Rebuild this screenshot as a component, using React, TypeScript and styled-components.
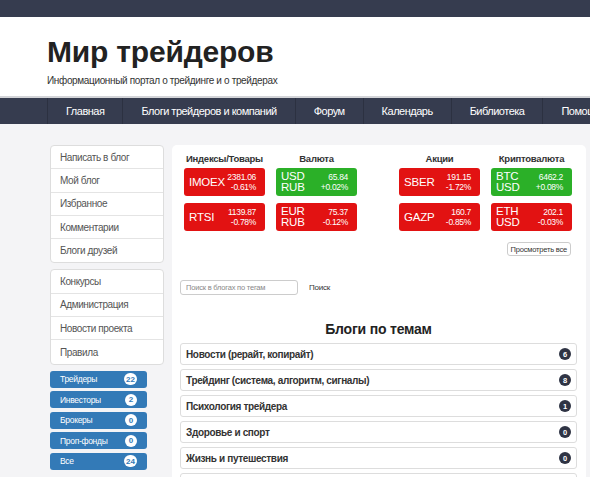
import React from 'react';
import styled, { createGlobalStyle } from 'styled-components';

const GlobalStyle = createGlobalStyle`
body {
  margin: 0;
  overflow: hidden;
  font-family: "Liberation Sans", Arial, sans-serif;
  background: #f4f4f6;
}
`;

type Quote = { name: string[]; price: string; change: string; up?: boolean };

const columns: { title: string; shift: number; quotes: Quote[] }[] = [
  {
    title: 'Индексы/Товары',
    shift: 0,
    quotes: [
      { name: ['IMOEX'], price: '2381.06', change: '-0.61%' },
      { name: ['RTSI'], price: '1139.87', change: '-0.78%' },
    ],
  },
  {
    title: 'Валюта',
    shift: 11,
    quotes: [
      { name: ['USD', 'RUB'], price: '65.84', change: '+0.02%', up: true },
      { name: ['EUR', 'RUB'], price: '75.37', change: '-0.12%' },
    ],
  },
  {
    title: 'Акции',
    shift: 42,
    quotes: [
      { name: ['SBER'], price: '191.15', change: '-1.72%' },
      { name: ['GAZP'], price: '160.7', change: '-0.85%' },
    ],
  },
  {
    title: 'Криптовалюта',
    shift: 11,
    quotes: [
      { name: ['BTC', 'USD'], price: '6462.2', change: '+0.08%', up: true },
      { name: ['ETH', 'USD'], price: '202.1', change: '-0.03%' },
    ],
  },
];

const topics = [
  { title: 'Новости (рерайт, копирайт)', count: 6 },
  { title: 'Трейдинг (система, алгоритм, сигналы)', count: 8 },
  { title: 'Психология трейдера', count: 1 },
  { title: 'Здоровье и спорт', count: 0 },
  { title: 'Жизнь и путешествия', count: 0 },
  { title: 'Разное', count: 0 },
];

const groups = [
  { title: 'Трейдеры', count: 22 },
  { title: 'Инвесторы', count: 2 },
  { title: 'Брокеры', count: 0 },
  { title: 'Проп-фонды', count: 0 },
  { title: 'Все', count: 24 },
];

const App = () => {
  return (
    <Page>
      <GlobalStyle />
      <TopStrip />
      <Header>
        <Title>Мир трейдеров</Title>
        <Subtitle>Информационный портал о трейдинге и о трейдерах</Subtitle>
      </Header>
      <Nav>
        <NavList>
          <NavItem>Главная</NavItem>
          <NavItem>Блоги трейдеров и компаний</NavItem>
          <NavItem>Форум</NavItem>
          <NavItem>Календарь</NavItem>
          <NavItem>Библиотека</NavItem>
          <NavItem>Помощь</NavItem>
        </NavList>
      </Nav>

      <Content>
        <Sidebar>
          <ListGroup>
            <ListItem>Написать в блог</ListItem>
            <ListItem>Мой блог</ListItem>
            <ListItem>Избранное</ListItem>
            <ListItem>Комментарии</ListItem>
            <ListItem>Блоги друзей</ListItem>
          </ListGroup>
          <ListGroup>
            <ListItem>Конкурсы</ListItem>
            <ListItem>Администрация</ListItem>
            <ListItem>Новости проекта</ListItem>
            <ListItem>Правила</ListItem>
          </ListGroup>
          <Buttons>
            {groups.map((g) => (
              <BlueButton key={g.title}>
                {g.title}
                <WhiteBadge>{g.count}</WhiteBadge>
              </BlueButton>
            ))}
          </Buttons>
        </Sidebar>

        <Panel>
          <Quotes>
            {columns.map((c) => (
              <QuoteColumn key={c.title} $shift={c.shift}>
                <ColumnTitle>{c.title}</ColumnTitle>
                {c.quotes.map((q) => (
                  <QuoteCard key={q.price} $up={q.up}>
                    <Ticker $small={q.name.length > 1}>
                      {q.name.map((n) => (
                        <span key={n}>{n}</span>
                      ))}
                    </Ticker>
                    <Numbers>
                      <span>{q.price}</span>
                      <span>{q.change}</span>
                    </Numbers>
                  </QuoteCard>
                ))}
              </QuoteColumn>
            ))}
          </Quotes>
          <MoreRow>
            <SmallButton>Просмотреть все</SmallButton>
          </MoreRow>

          <SearchRow>
            <SearchInput placeholder="Поиск в блогах по тегам" />
            <SearchLink>Поиск</SearchLink>
          </SearchRow>

          <SectionTitle>Блоги по темам</SectionTitle>
          <TopicList>
            {topics.map((t) => (
              <TopicItem key={t.title}>
                {t.title}
                <DarkBadge>{t.count}</DarkBadge>
              </TopicItem>
            ))}
          </TopicList>
        </Panel>
      </Content>
    </Page>
  );
};

export default App;

const Page = styled.div`
width: 590px;
height: 477px;
overflow: hidden;
background: #f4f4f6;
`;

const TopStrip = styled.div`
height: 17px;
background: #363c4f;
`;

const Header = styled.div`
height: 81px;
background: #fff;
padding-left: 47px;
border-bottom: 2px solid #d3d4d8;
box-sizing: border-box;
`;

const Title = styled.div`
padding-top: 18px;
font-size: 30px;
font-weight: 700;
color: #222;
line-height: 34px;
letter-spacing: -0.2px;
`;

const Subtitle = styled.div`
margin-top: 6px;
font-size: 10px;
letter-spacing: -0.35px;
color: #333;
`;

const Nav = styled.div`
height: 26px;
background: #363c4f;
`;

const NavList = styled.div`
display: flex;
margin-left: 47px;
height: 100%;
border-left: 1px solid #2c3141;
`;

const NavItem = styled.div`
flex-shrink: 0;
padding: 0 18px 0 18px;
display: flex;
align-items: center;
font-size: 11px;
letter-spacing: -0.5px;
color: #fff;
border-right: 1px solid #2c3141;
white-space: nowrap;
`;

const Content = styled.div`
display: flex;
gap: 8px;
padding: 21px 0 0 50px;
`;

const Sidebar = styled.div`
width: 114px;
flex-shrink: 0;
display: flex;
flex-direction: column;
`;

const ListGroup = styled.div`
background: #fff;
border: 1px solid #dddddd;
border-radius: 4px;
margin-bottom: 6px;
`;

const ListItem = styled.div`
height: 23.3px;
box-sizing: border-box;
display: flex;
align-items: center;
padding-left: 9px;
font-size: 10px;
letter-spacing: -0.4px;
color: #555;
border-bottom: 1px solid #e4e4e4;
&:last-child {
  border-bottom: none;
}
`;

const Buttons = styled.div`
display: flex;
flex-direction: column;
gap: 3.5px;
`;

const BlueButton = styled.div`
height: 17px;
width: 97px;
box-sizing: border-box;
background: #337ab7;
border-radius: 3px;
padding: 0 10px;
display: flex;
align-items: center;
justify-content: space-between;
font-size: 8.5px;
letter-spacing: -0.3px;
color: #fff;
`;

const WhiteBadge = styled.span`
min-width: 8px;
height: 12px;
padding: 0 2px;
border-radius: 6px;
background: #fff;
color: #337ab7;
font-size: 8px;
font-weight: 700;
letter-spacing: 0;
display: flex;
align-items: center;
justify-content: center;
`;

const Panel = styled.div`
width: 414px;
flex-shrink: 0;
height: 400px;
background: #fff;
border-radius: 5px;
padding: 8px 9px 0 8px;
box-sizing: border-box;
`;

const Quotes = styled.div`
display: flex;
padding-left: 4px;
`;

const QuoteColumn = styled.div<{ $shift: number }>`
width: 81px;
margin-left: ${(p) => p.$shift}px;
display: flex;
flex-direction: column;
gap: 7px;
`;

const ColumnTitle = styled.div`
text-align: center;
font-size: 9.5px;
font-weight: 700;
letter-spacing: -0.25px;
white-space: nowrap;
color: #333;
line-height: 12px;
margin-bottom: -4px;
`;

const QuoteCard = styled.div<{ $up?: boolean }>`
height: 28px;
border-radius: 3px;
background: ${(p) => (p.$up ? '#2bb028' : '#e21212')};
color: #fff;
display: flex;
align-items: center;
justify-content: space-between;
padding: 0 9px 0 5px;
`;

const Ticker = styled.div<{ $small: boolean }>`
display: flex;
flex-direction: column;
font-size: 11.5px;
letter-spacing: -0.2px;
line-height: ${(p) => (p.$small ? '11.5px' : '14px')};
`;

const Numbers = styled.div`
display: flex;
flex-direction: column;
align-items: flex-end;
font-size: 8.5px;
letter-spacing: -0.3px;
line-height: 10.5px;
`;

const MoreRow = styled.div`
display: flex;
justify-content: flex-end;
padding-right: 6px;
margin-top: 11px;
`;

const SmallButton = styled.div`
height: 12px;
padding: 0 3px;
border: 1px solid #cccccc;
border-radius: 3px;
font-size: 7.5px;
letter-spacing: -0.2px;
color: #333;
display: flex;
align-items: center;
`;

const SearchRow = styled.div`
display: flex;
align-items: center;
margin-top: 24px;
`;

const SearchInput = styled.input`
width: 118px;
height: 15px;
box-sizing: border-box;
border: 1px solid #cccccc;
border-radius: 3px;
padding: 0 5px;
font-family: inherit;
font-size: 7.5px;
letter-spacing: -0.2px;
outline: none;
&::placeholder {
  color: #888;
}
`;

const SearchLink = styled.span`
margin-left: 11px;
font-size: 8px;
letter-spacing: -0.2px;
color: #333;
`;

const SectionTitle = styled.div`
margin-top: 26px;
text-align: center;
font-size: 14px;
font-weight: 700;
letter-spacing: -0.2px;
color: #222;
line-height: 16px;
`;

const TopicList = styled.div`
margin-top: 6px;
display: flex;
flex-direction: column;
gap: 4px;
`;

const TopicItem = styled.div`
height: 22px;
box-sizing: border-box;
border: 1px solid #dddddd;
border-radius: 3px;
padding: 0 5px 0 5px;
display: flex;
align-items: center;
justify-content: space-between;
font-size: 10px;
letter-spacing: -0.35px;
font-weight: 700;
color: #333;
`;

const DarkBadge = styled.span`
width: 12px;
height: 12px;
border-radius: 50%;
background: #2f3444;
color: #fff;
font-size: 7.5px;
font-weight: 700;
letter-spacing: 0;
display: flex;
align-items: center;
justify-content: center;
`;
